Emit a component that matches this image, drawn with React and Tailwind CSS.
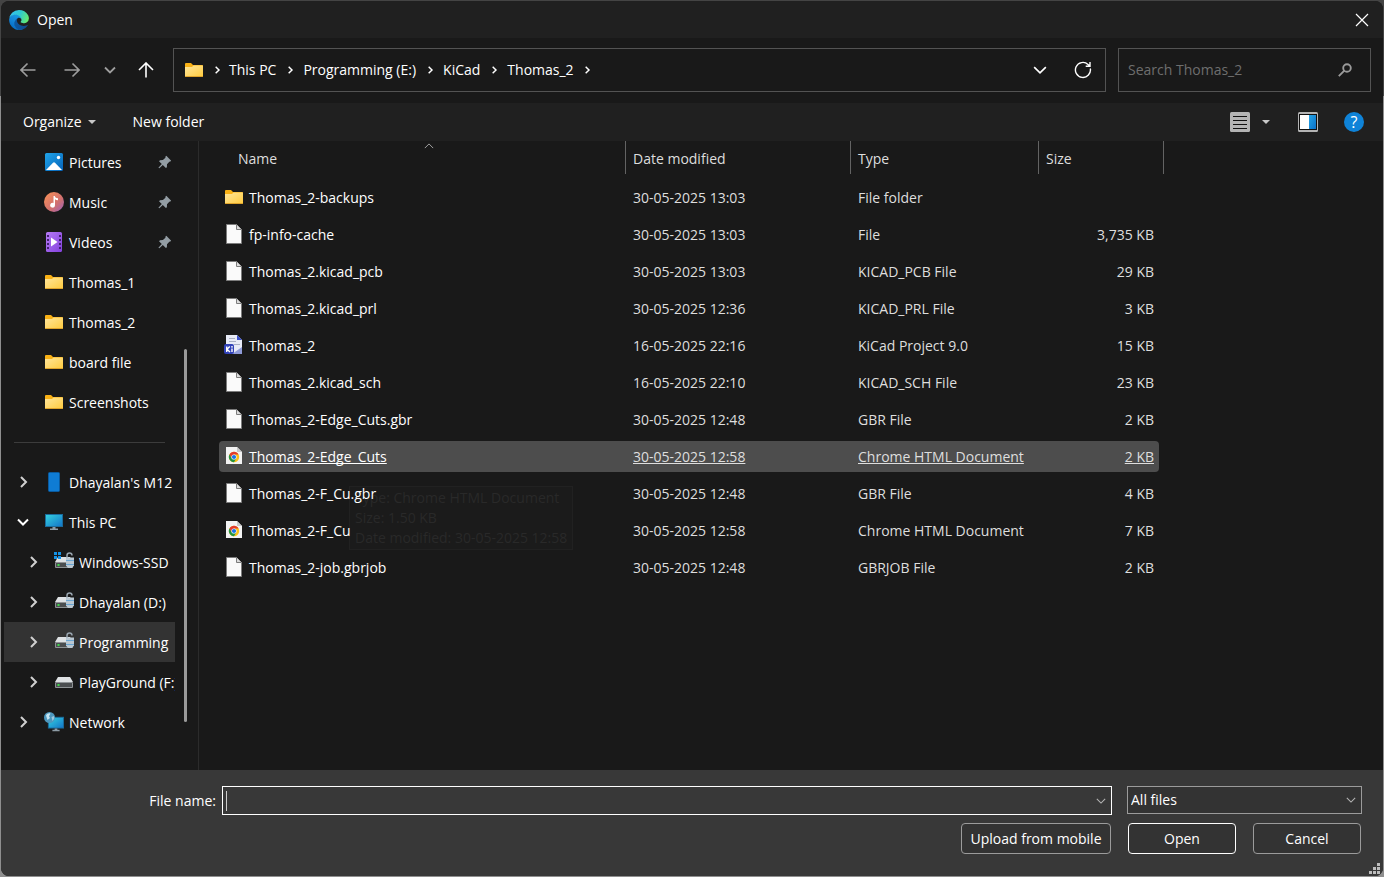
import React, { useState } from 'react';

function EdgeLogo() {
  return (
    <svg width="20" height="20" viewBox="0 0 256 259" aria-hidden="true">
      <defs>
        <linearGradient id="edgeDark" x1="0" y1="0" x2="1" y2="0">
          <stop offset="0" stopColor="#0c59a4" />
          <stop offset="1" stopColor="#114a8b" />
        </linearGradient>
        <linearGradient id="edgeMid" x1="0.7" y1="0" x2="0.2" y2="1">
          <stop offset="0" stopColor="#1b9de2" />
          <stop offset="0.5" stopColor="#1384d8" />
          <stop offset="1" stopColor="#0067c0" />
        </linearGradient>
        <linearGradient id="edgeTop" x1="0" y1="0.3" x2="1" y2="0.6">
          <stop offset="0" stopColor="#35c1f1" />
          <stop offset="0.5" stopColor="#2fc9d0" />
          <stop offset="1" stopColor="#66eb6e" />
        </linearGradient>
      </defs>
      <path fill="url(#edgeDark)" d="M235.68 195.46a93.73 93.73 0 0 1-10.54 4.71 101.87 101.87 0 0 1-35.9 6.46c-47.32 0-88.54-32.55-88.54-74.32A31.48 31.48 0 0 1 117.13 105c-42.8 1.8-53.8 46.4-53.8 72.53 0 73.88 68.09 81.37 82.76 81.37 7.91 0 19.84-2.3 27-4.56l1.31-.44a128.34 128.34 0 0 0 66.6-52.8 4 4 0 0 0-5.32-5.64Z" />
      <path fill="url(#edgeMid)" d="M105.73 244.42a79.2 79.2 0 0 1-22.74-21.34 80.72 80.72 0 0 1 29.53-120c3.12-1.47 8.45-4.13 15.54-4a32.35 32.35 0 0 1 25.69 13 31.88 31.88 0 0 1 6.36 18.66c0-.21 24.46-79.6-80-79.6-43.9 0-80 41.66-80 78.21a130.15 130.15 0 0 0 12.11 56 128 128 0 0 0 156.38 67.11 75.55 75.55 0 0 1-62.78-8Z" />
      <path fill="url(#edgeTop)" d="M152.33 148.86c-.81 1.05-3.3 2.5-3.3 5.66 0 2.61 1.7 5.12 4.72 7.23 14.38 10 41.49 8.68 41.56 8.68a59.56 59.56 0 0 0 30.27-8.35A61.38 61.38 0 0 0 256 109.27c.26-22.41-8-37.31-11.34-43.91C223.46 23.84 177.72 0 128 0A128 128 0 0 0 0 126.2c.48-36.54 36.8-66.05 80-66.05 3.5 0 23.46.34 42 10.07 16.34 8.58 24.9 18.94 30.85 29.21 6.18 10.67 7.28 24.15 7.28 29.52 0 5.37-2.74 13.33-7.8 19.91Z" />
    </svg>
  );
}

function FolderIcon() {
  return (
    <svg width="20" height="20" viewBox="0 0 20 20" aria-hidden="true">
      <defs>
        <linearGradient id="folder" x1="0" y1="0" x2="1" y2="1">
          <stop offset="0" stopColor="#ffe69c" />
          <stop offset="1" stopColor="#ffcb3d" />
        </linearGradient>
      </defs>
      <path fill="#f9b115" d="M1 4a1 1 0 0 1 1-1h5l2 2h9a1 1 0 0 1 1 1v6H1z" />
      <path fill="url(#folder)" d="M1 7h7l1.500-1.500H19V16a1 1 0 0 1-1 1H2a1 1 0 0 1-1-1z" />
      <path fill="#dfa32a" d="M1 16h18a1 1 0 0 1-1 1H2a1 1 0 0 1-1-1z" />
    </svg>
  );
}

function FileIcon() {
  return (
    <svg width="20" height="20" viewBox="0 0 20 20" aria-hidden="true">
      <path fill="#fafafa" stroke="#7c7c7c" d="M2.500.5h10l5 5v14h-15z" />
      <path fill="#dcdcdc" stroke="#7c7c7c" d="M12.500.5v5h5" />
    </svg>
  );
}

function ChromeFileIcon() {
  return (
    <svg width="20" height="20" viewBox="0 0 20 20" aria-hidden="true">
      <path fill="#f3f3f3" d="M2 1h11l5 5v12H2z" />
      <path fill="#c9c9c9" d="M13 1l5 5h-5z" />
      <circle cx="10" cy="11" r="5.200" fill="#fbc116" />
      <path fill="#e33b2e" d="M5.500 8.400A5.200 5.200 0 0 1 14.500 8.400H10L7.700 12.300z" />
      <path fill="#229342" d="M5.500 8.400A5.200 5.200 0 0 0 10 16.200L12.300 12.300H7.700z" />
      <circle cx="10" cy="11" r="2.600" fill="#fff" />
      <circle cx="10" cy="11" r="2.100" fill="#1a73e8" />
    </svg>
  );
}

function KicadFileIcon() {
  return (
    <svg width="20" height="20" viewBox="0 0 20 20" aria-hidden="true">
      <path fill="#e8ebf7" d="M2 0h11l5 5v14H2z" />
      <path fill="#8f9bd8" d="M8 19l10-7v7z" />
      <path fill="#3a50c8" d="M13 0l5 5h-5z" />
      <path stroke="#aab0c4" d="M5 3.500h6M5 6.500h7M10 9.500h6" />
      <rect x="0" y="9" width="10" height="10" rx="2" fill="#3142b8" />
      <path fill="none" stroke="#fff" strokeWidth="1.400" d="M2.700 11.500v5.500M5.800 11.500L3 14.200l3 2.800M8 13.500V17" />
      <circle cx="8" cy="11.800" r="0.900" fill="#fff" />
    </svg>
  );
}

function PicturesIcon() {
  return (
    <svg width="20" height="20" viewBox="0 0 20 20" aria-hidden="true">
      <defs>
        <linearGradient id="pic" x1="0" y1="0" x2="1" y2="1">
          <stop offset="0" stopColor="#20a4ea" />
          <stop offset="1" stopColor="#0663b8" />
        </linearGradient>
      </defs>
      <rect x="1" y="1" width="18" height="18" rx="1.500" fill="url(#pic)" />
      <path fill="#fff" d="M2 18l7-7.300a1.400 1.400 0 0 1 2 0L18 18z" />
      <circle cx="14.500" cy="5.500" r="1.700" fill="#fff" />
    </svg>
  );
}

function MusicIcon() {
  return (
    <svg width="20" height="20" viewBox="0 0 20 20" aria-hidden="true">
      <defs>
        <linearGradient id="music" x1="0" y1="0" x2="1" y2="1">
          <stop offset="0.150" stopColor="#f08a5c" />
          <stop offset="0.600" stopColor="#d0706f" />
          <stop offset="1" stopColor="#9a5fc0" />
        </linearGradient>
      </defs>
      <circle cx="10" cy="10" r="10" fill="url(#music)" />
      <path fill="#fff" d="M9.500 4h1.300c.4 1.500 1.400 2.200 3.200 2.200v2c-1.300 0-2.300-.3-3-.9v5.900a2.400 2.400 0 1 1-1.500-2.200z" />
    </svg>
  );
}

function VideosIcon() {
  return (
    <svg width="20" height="20" viewBox="0 0 20 20" aria-hidden="true">
      <defs>
        <linearGradient id="vid" x1="0" y1="0" x2="1" y2="1">
          <stop offset="0" stopColor="#b57bf5" />
          <stop offset="1" stopColor="#8441dd" />
        </linearGradient>
      </defs>
      <rect x="2" y="0" width="16" height="20" rx="1.500" fill="url(#vid)" />
      <path stroke="#432070" strokeWidth="2" strokeDasharray="2 2" d="M4 3v15M16 3v15" />
      <path fill="#fff" d="M7 5.500l6.500 4.500L7 14.500z" />
    </svg>
  );
}

function PhoneIcon() {
  return (
    <svg width="20" height="20" viewBox="0 0 20 20" aria-hidden="true">
      <rect x="4.500" y="0.500" width="11" height="19" rx="1" fill="#0f7cd4" stroke="#0a5a9e" />
    </svg>
  );
}

function MonitorShapes() {
  return (
    <>
      <defs>
        <linearGradient id="pc" x1="0" y1="0" x2="1" y2="1">
          <stop offset="0" stopColor="#35d3e0" />
          <stop offset="1" stopColor="#1273c8" />
        </linearGradient>
      </defs>
      <rect x="1.500" y="2.500" width="17" height="12" fill="url(#pc)" stroke="#1a6b9c" />
      <path fill="#8d9ba5" d="M8.500 15h3v1.500H14V18H6v-1.500h2.500z" />
    </>
  );
}

function PcIcon() {
  return (
    <svg width="20" height="20" viewBox="0 0 20 20" aria-hidden="true">
      <MonitorShapes />
    </svg>
  );
}

function NetworkIcon() {
  return (
    <svg width="20" height="20" viewBox="0 0 20 20" aria-hidden="true">
      <g transform="translate(3 3) scale(0.900)">
        <MonitorShapes />
      </g>
      <circle cx="5.500" cy="5.500" r="5.500" fill="#4d97bd" />
      <path fill="#c5e4f2" d="M2 3.500c1-2 3-2.600 4.500-2L5 4.200 6 6 3.500 8z" />
      <path fill="#9cc9de" d="M7.500 5l2.500-1c.5 2 0 3.500-1.500 5z" />
    </svg>
  );
}

function DriveIcon({ lock, windows }) {
  return (
    <svg width="20" height="20" viewBox="0 0 20 20" aria-hidden="true">
      <path fill="#dfe2e4" d="M4 5h12l3 5H1z" />
      <rect x="1" y="10" width="18" height="6" rx="1" fill="#8f9396" />
      <rect x="2" y="11" width="16" height="4" fill="#4b4e50" />
      <rect x="3.500" y="12" width="2" height="2" fill="#3fdc4b" />
      {windows && <path fill="#1492e6" d="M0 0h3v3H0zM4 0h3v3H4zM0 4h3v3H0zM4 4h3v3H4z" />}
      {lock && (
        <g>
          <path fill="none" stroke="#98a4ae" strokeWidth="1.500" d="M13 6V3.500a2.500 2.500 0 0 1 5 0" />
          <path fill="#b9c7d2" d="M12 5.500h8v8l-2 2.500h-4l-2-2.500z" />
          <path stroke="#6aa5d2" d="M12 8.500h8M12 12.500h8" />
        </g>
      )}
    </svg>
  );
}

function PinIcon() {
  return (
    <svg width="14" height="14" viewBox="0 0 14 14" aria-hidden="true">
      <path fill="#939da4" d="M8.300.8L13.200 5.700l-.9.900-1 .1-2.300 2.600-.1 2.900-1 .9L4.800 10 1.300 13.300l-.9-.6L3.800 9 1 6.200l1-1 2.900-.1 2.500-2.300.1-1.200z" />
    </svg>
  );
}

function Chevron({ dir = 'right', size = 12, width = 2, color = 'currentColor' }) {
  const d = {
    right: 'M4 1l5 5-5 5',
    down: 'M1 3.500l5 5 5-5',
    up: 'M1 8.500l5-5 5 5',
  }[dir];
  return (
    <svg width={size} height={size} viewBox="0 0 12 12" fill="none" stroke={color} strokeWidth={width} aria-hidden="true">
      <path d={d} />
    </svg>
  );
}

function Caret() {
  return (
    <svg width="8" height="4" viewBox="0 0 8 4" aria-hidden="true">
      <path fill="#c8c8c8" d="M0 0h8L4 4z" />
    </svg>
  );
}

function ArrowIcon({ d }) {
  return (
    <svg width="16" height="16" viewBox="0 0 16 16" fill="none" stroke="currentColor" strokeWidth="1.600" aria-hidden="true">
      <path d={d} />
    </svg>
  );
}

const quickAccess = [
  { name: 'Pictures', icon: <PicturesIcon />, pinned: true },
  { name: 'Music', icon: <MusicIcon />, pinned: true },
  { name: 'Videos', icon: <VideosIcon />, pinned: true },
  { name: 'Thomas_1', icon: <FolderIcon /> },
  { name: 'Thomas_2', icon: <FolderIcon /> },
  { name: 'board file', icon: <FolderIcon /> },
  { name: 'Screenshots', icon: <FolderIcon /> },
];

const tree = [
  { name: "Dhayalan's M12", icon: <PhoneIcon /> },
  { name: 'This PC', icon: <PcIcon />, open: true },
  { name: 'Windows-SSD', icon: <DriveIcon lock windows />, child: true },
  { name: 'Dhayalan (D:)', icon: <DriveIcon lock />, child: true },
  { name: 'Programming', icon: <DriveIcon lock />, child: true, active: true },
  { name: 'PlayGround (F:)', icon: <DriveIcon />, child: true },
  { name: 'Network', icon: <NetworkIcon /> },
];

const files = [
  { name: 'Thomas_2-backups', date: '30-05-2025 13:03', type: 'File folder', size: '', icon: <FolderIcon /> },
  { name: 'fp-info-cache', date: '30-05-2025 13:03', type: 'File', size: '3,735 KB', icon: <FileIcon /> },
  { name: 'Thomas_2.kicad_pcb', date: '30-05-2025 13:03', type: 'KICAD_PCB File', size: '29 KB', icon: <FileIcon /> },
  { name: 'Thomas_2.kicad_prl', date: '30-05-2025 12:36', type: 'KICAD_PRL File', size: '3 KB', icon: <FileIcon /> },
  { name: 'Thomas_2', date: '16-05-2025 22:16', type: 'KiCad Project 9.0', size: '15 KB', icon: <KicadFileIcon /> },
  { name: 'Thomas_2.kicad_sch', date: '16-05-2025 22:10', type: 'KICAD_SCH File', size: '23 KB', icon: <FileIcon /> },
  { name: 'Thomas_2-Edge_Cuts.gbr', date: '30-05-2025 12:48', type: 'GBR File', size: '2 KB', icon: <FileIcon /> },
  { name: 'Thomas_2-Edge_Cuts', date: '30-05-2025 12:58', type: 'Chrome HTML Document', size: '2 KB', icon: <ChromeFileIcon /> },
  { name: 'Thomas_2-F_Cu.gbr', date: '30-05-2025 12:48', type: 'GBR File', size: '4 KB', icon: <FileIcon /> },
  { name: 'Thomas_2-F_Cu', date: '30-05-2025 12:58', type: 'Chrome HTML Document', size: '7 KB', icon: <ChromeFileIcon /> },
  { name: 'Thomas_2-job.gbrjob', date: '30-05-2025 12:48', type: 'GBRJOB File', size: '2 KB', icon: <FileIcon /> },
];

const path = ['This PC', 'Programming (E:)', 'KiCad', 'Thomas_2'];

function TitleBar() {
  return (
    <header className="flex h-[37px] items-center bg-[#202020] pl-2 pr-[14px]">
      <EdgeLogo />
      <h1 className="ml-2 flex-1">Open</h1>
      <button aria-label="Close">
        <svg width="14" height="14" viewBox="0 0 14 14" stroke="#fff" strokeWidth="1.200" aria-hidden="true">
          <path d="M1 1l12 12M13 1L1 13" />
        </svg>
      </button>
    </header>
  );
}

function NavBar() {
  return (
    <div className="flex h-[65px] items-start pt-[10px] pl-[5px] pr-3">
      <div className="flex h-11 text-[#9d9d9d]">
        <button className="flex w-11 items-center justify-center" aria-label="Back">
          <ArrowIcon d="M15.500 8H1M7.500 1.500L1 8l6.500 6.500" />
        </button>
        <button className="flex w-11 items-center justify-center" aria-label="Forward">
          <ArrowIcon d="M.5 8H15M8.500 1.500L15 8l-6.500 6.500" />
        </button>
        <button className="flex w-8 items-center justify-center" aria-label="Recent locations">
          <Chevron dir="down" width={1.8} />
        </button>
        <button className="flex w-10 items-center justify-center text-white" aria-label="Up">
          <ArrowIcon d="M8 15.500V1M1 8l7-7 7 7" />
        </button>
      </div>
      <nav className="ml-[7px] flex h-11 flex-1 items-center border border-[#535353] pl-[10px]" aria-label="Address">
        <FolderIcon />
        <span className="flex w-[25px] justify-center">
          <Chevron size={8} width={2.2} />
        </span>
        {path.map((part) => (
          <React.Fragment key={part}>
            <a href="#">{part}</a>
            <span className="flex w-[27px] justify-center">
              <Chevron size={8} width={2.2} />
            </span>
          </React.Fragment>
        ))}
        <div className="ml-auto flex">
          <button className="flex w-[42px] items-center justify-center" aria-label="Previous locations">
            <Chevron dir="down" size={14} width={1.4} />
          </button>
          <button className="flex w-11 items-center justify-center" aria-label="Refresh">
            <svg width="18" height="18" viewBox="0 0 18 18" fill="none" stroke="#fff" strokeWidth="1.400" aria-hidden="true">
              <path d="M16.300 7.500A7.500 7.500 0 1 1 14 3.400L15.500 4.800M16 1v4.300h-4.300" />
            </svg>
          </button>
        </div>
      </nav>
      <div className="ml-3 flex h-11 w-[253px] items-center border border-[#535353] pl-[9px] pr-[18px]">
        <input
          type="search"
          aria-label="Search Thomas_2"
          placeholder="Search Thomas_2"
          className="min-w-0 flex-1 bg-transparent outline-none placeholder:text-[#6e6e6e]"
        />
        <svg width="14" height="14" viewBox="0 0 14 14" fill="none" stroke="#9a9a9a" strokeWidth="1.900" aria-hidden="true">
          <circle cx="9" cy="5" r="3.800" />
          <path d="M6.300 7.700L.8 13.200" />
        </svg>
      </div>
    </div>
  );
}

function Toolbar() {
  return (
    <div className="flex h-[38px] items-center bg-[#202020] pl-[22px] pr-[19px]">
      <button className="flex items-center gap-[6px]">
        Organize
        <Caret />
      </button>
      <button className="ml-[37px]">New folder</button>
      <div className="ml-auto flex items-center">
        <button aria-label="View">
          <svg width="20" height="20" viewBox="0 0 20 20" aria-hidden="true">
            <rect width="20" height="20" rx="1.500" fill="#b4b4b4" />
            <path stroke="#111" d="M3 4.500h14M3 8.500h14M3 12.500h14M3 16.500h14" />
          </svg>
        </button>
        <button className="ml-3" aria-label="More view options">
          <Caret />
        </button>
        <button className="ml-7" aria-label="Preview pane">
          <svg width="20" height="20" viewBox="0 0 20 20" aria-hidden="true">
            <defs>
              <linearGradient id="pane" x1="0" y1="0" x2="1" y2="1">
                <stop offset="0" stopColor="#25a5e6" />
                <stop offset="1" stopColor="#0a70c8" />
              </linearGradient>
            </defs>
            <rect width="20" height="20" rx="1.500" fill="#b4b4b4" />
            <rect x="1" y="2" width="18" height="16" fill="#111" />
            <rect x="2" y="3" width="9" height="14" fill="#fff" />
            <rect x="11" y="3" width="7" height="14" fill="url(#pane)" />
          </svg>
        </button>
        <button
          className="ml-[26px] flex size-5 items-center justify-center rounded-full bg-[#0f83d8] text-base leading-5"
          aria-label="Help"
        >
          ?
        </button>
      </div>
    </div>
  );
}

function Sidebar() {
  return (
    <aside className="flex w-[198px] shrink-0 border-r border-[#2b2b2b] pl-[3px]">
      <nav className="w-[171px] overflow-hidden whitespace-nowrap pt-px" aria-label="Folders">
        <ul>
          {quickAccess.map((item) => (
            <li key={item.name} className="flex h-10 items-center pl-10 pr-[3px]">
              {item.icon}
              <a href="#" className="ml-[5px] flex-1 pt-[2px]">{item.name}</a>
              {item.pinned && <PinIcon />}
            </li>
          ))}
        </ul>
        <div className="flex h-10 items-center pl-[10px] pr-[10px]">
          <hr className="flex-1 border-[#3c3c3c]" />
        </div>
        <ul>
          {tree.map((item) => (
            <li
              key={item.name}
              className={`flex h-10 items-center ${item.child ? 'pl-[22px]' : 'pl-3'} ${item.active ? 'bg-[#333333]' : ''}`}
            >
              <button className="flex w-[14px] shrink-0 justify-center" aria-label={`Toggle ${item.name}`}>
                <Chevron dir={item.open ? 'down' : 'right'} color={item.open ? '#fff' : '#d0d0d0'} />
              </button>
              <span className="ml-[14px] shrink-0">{item.icon}</span>
              <a href="#" className="ml-[5px] pt-[2px]">{item.name}</a>
            </li>
          ))}
        </ul>
      </nav>
      <div className="flex flex-1 flex-col items-center pr-[2px]">
        <div className="flex-[208]" />
        <div className="w-[3px] flex-[373] rounded-full bg-[#9a9a9a]" />
        <div className="flex-[48]" />
      </div>
    </aside>
  );
}

function FileList() {
  const [selected, setSelected] = useState('Thomas_2-Edge_Cuts');

  return (
    <main className="relative isolate flex-1 pl-5">
      {/* fading hover tooltip */}
      <div className="absolute left-[150px] top-[345px] border border-[#212121] bg-[#1b1b1b] px-[5px] py-px leading-5 text-[#292929]">
        <div>Type: Chrome HTML Document</div>
        <div>Size: 1.50 KB</div>
        <div>Date modified: 30-05-2025 12:58</div>
      </div>
      <table className="relative w-[945px] table-fixed text-left text-[#dedede]">
        <colgroup>
          <col className="w-[407px]" />
          <col className="w-[225px]" />
          <col className="w-[188px]" />
          <col className="w-[125px]" />
        </colgroup>
        <thead>
          <tr>
            <th className="h-[38px] p-0 align-top font-normal">
              <div className="relative flex h-[33px] items-center border-r border-[#636363] pl-[19px] pt-[2px]">
                Name
                <span className="absolute left-1/2 top-0 ml-[2px]">
                  <Chevron dir="up" size={10} width={1.2} color="#a0a0a0" />
                </span>
              </div>
            </th>
            {['Date modified', 'Type', 'Size'].map((label) => (
              <th key={label} className="h-[38px] p-0 align-top font-normal">
                <div className="flex h-[33px] items-center border-r border-[#636363] pl-[7px] pt-[2px]">{label}</div>
              </th>
            ))}
          </tr>
        </thead>
        <tbody>
          {files.map((file) => {
            const active = file.name === selected;
            const bg = active ? 'bg-[#4d4d4d] underline underline-offset-1 [text-decoration-skip-ink:none]' : '';
            return (
              <tr key={file.name} onClick={() => setSelected(file.name)}>
                <td className="h-[37px] p-0 text-white">
                  <div className={`flex h-[31px] items-center gap-[5px] rounded-l-sm pl-[5px] ${bg}`}>
                    <span className="pb-[2px]">{file.icon}</span>
                    {file.name}
                  </div>
                </td>
                <td className="h-[37px] p-0">
                  <div className={`flex h-[31px] items-center pl-[7px] ${bg}`}>{file.date}</div>
                </td>
                <td className="h-[37px] p-0">
                  <div className={`flex h-[31px] items-center pl-[7px] ${bg}`}>{file.type}</div>
                </td>
                <td className="h-[37px] p-0">
                  <div className={`mr-[5px] flex h-[31px] items-center justify-end rounded-r-sm pr-[5px] ${bg}`}>
                    {file.size}
                  </div>
                </td>
              </tr>
            );
          })}
        </tbody>
      </table>
    </main>
  );
}

function Footer() {
  const [fileName, setFileName] = useState('');

  return (
    <footer className="relative h-[106px] bg-[#383838] pl-[21px] pr-[21px] pt-4">
      <div className="flex items-start">
        <label htmlFor="filename" className="w-[194px] shrink-0 text-right leading-[29px]">File name:</label>
        <div className="ml-[6px] flex h-[29px] flex-1 items-center border border-white bg-[#383838] pl-[3px] pr-[5px]">
          <span className="h-5 w-px bg-[#cccccc]" />
          <input
            id="filename"
            type="text"
            value={fileName}
            onChange={(e) => setFileName(e.target.value)}
            className="min-w-0 flex-1 bg-transparent outline-none"
          />
          <button aria-label="Show previous file names">
            <Chevron dir="down" size={10} width={1.3} color="#b4b4b4" />
          </button>
        </div>
        <div className="relative ml-[15px] w-[235px]">
          <select
            aria-label="File type"
            className="h-7 w-full appearance-none border border-[#9b9b9b] bg-[#333333] pl-[3px] outline-none"
          >
            <option>All files</option>
          </select>
          <span className="pointer-events-none absolute inset-y-0 right-[6px] flex items-center">
            <Chevron dir="down" size={10} width={1.3} color="#b4b4b4" />
          </span>
        </div>
      </div>
      <div className="mt-2 flex justify-end gap-[17px] pr-px">
        <button className="h-[31px] w-[150px] whitespace-nowrap rounded border border-[#9b9b9b] bg-[#333333]">
          Upload from mobile
        </button>
        <button className="h-[31px] w-[108px] rounded border border-white bg-[#333333]">Open</button>
        <button className="h-[31px] w-[108px] rounded border border-[#9b9b9b] bg-[#333333]">Cancel</button>
      </div>
      <svg className="absolute bottom-[2px] right-[3px]" width="11" height="11" viewBox="0 0 11 11" aria-hidden="true">
        <path fill="#bdbdbd" d="M8 0h3v3H8zM4 4h3v3H4zM8 4h3v3H8zM0 8h3v3H0zM4 8h3v3H4zM8 8h3v3H8z" />
      </svg>
    </footer>
  );
}

export default function App() {
  return (
    <div className="flex min-h-screen flex-col bg-[linear-gradient(#444444_96px,#8f8f8f_96px)] p-px font-['Open_Sans','Noto_Sans',sans-serif] text-sm text-white">
      <div className="flex flex-1 flex-col overflow-hidden rounded-lg bg-[#191919]">
        <TitleBar />
        <NavBar />
        <Toolbar />
        <div className="flex flex-1">
          <Sidebar />
          <FileList />
        </div>
        <Footer />
      </div>
    </div>
  );
}
